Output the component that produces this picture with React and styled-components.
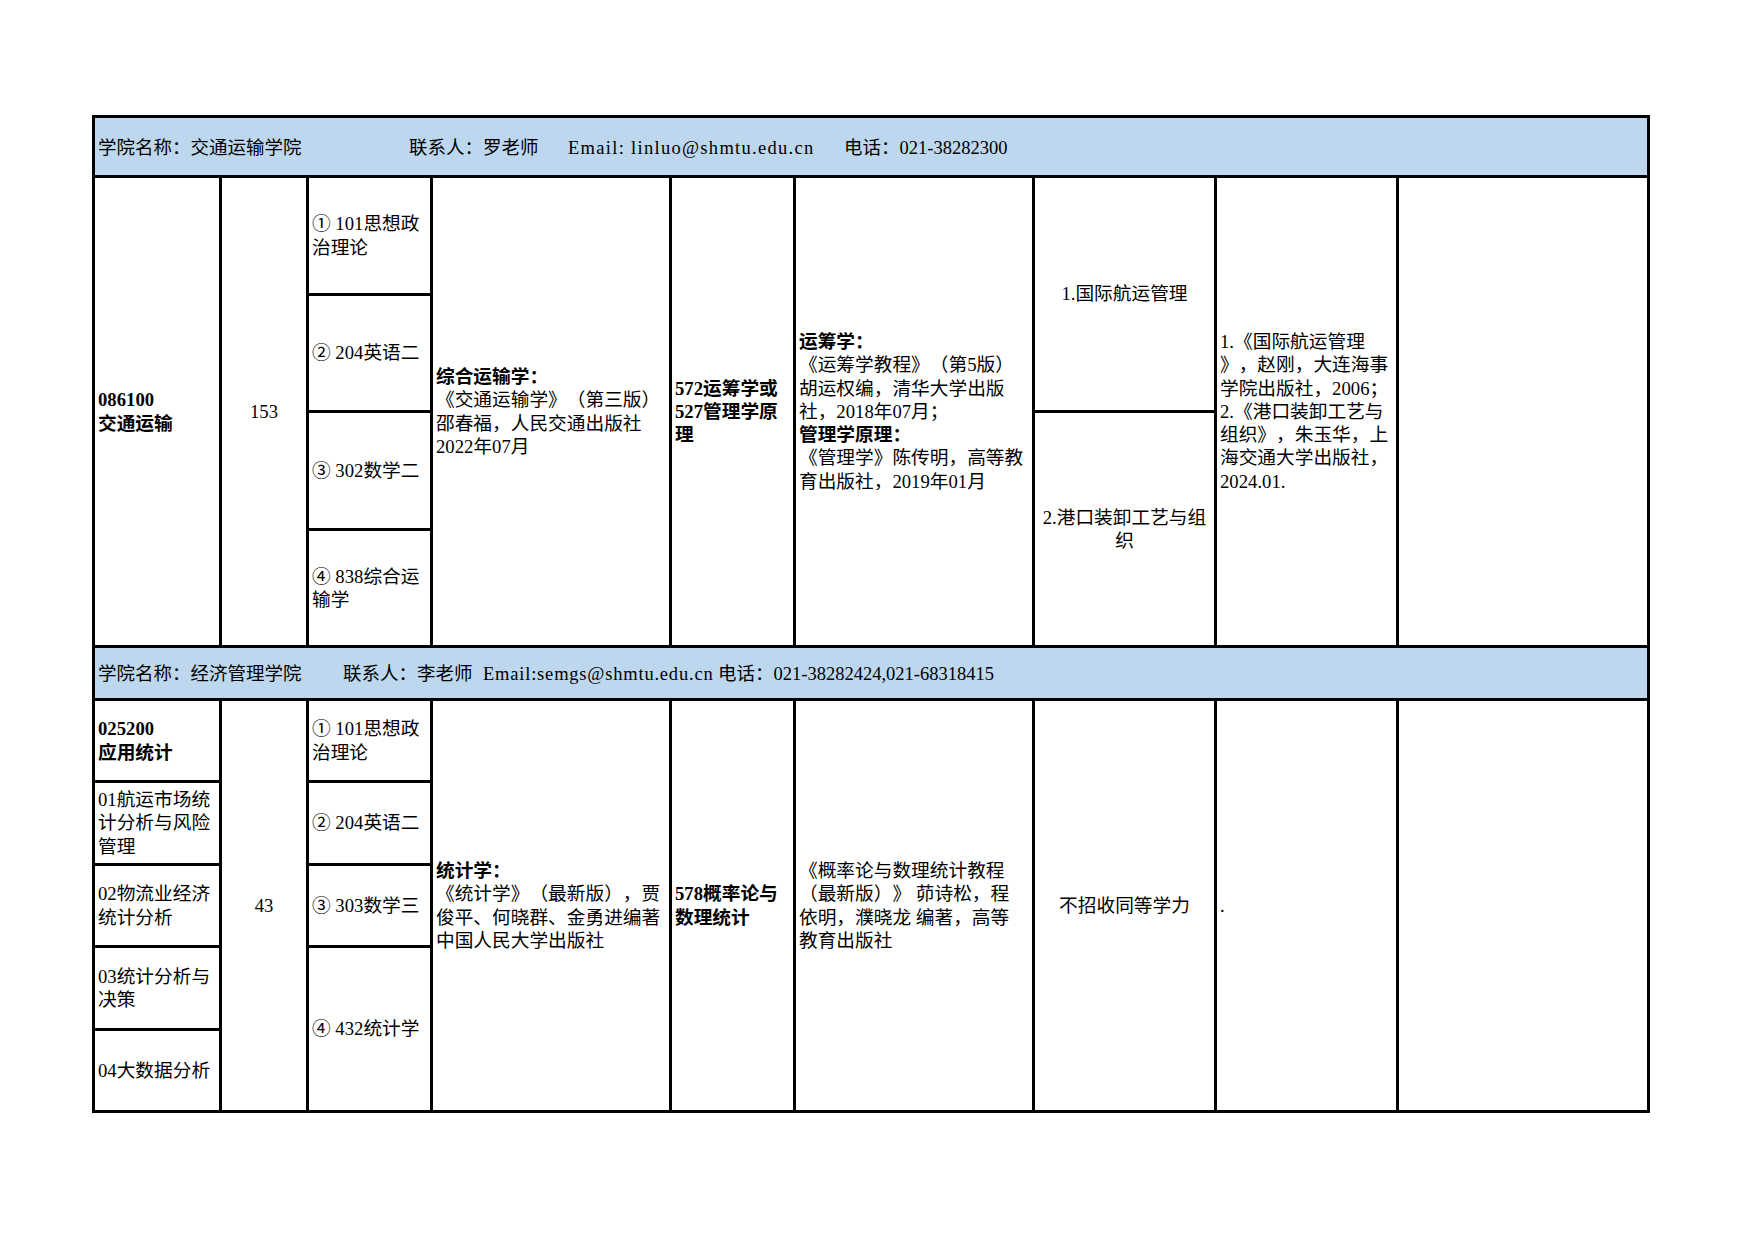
import React from "react";
import styled, { createGlobalStyle } from "styled-components";

const GlobalStyle = createGlobalStyle`
  html, body { margin: 0; padding: 0; background: #ffffff; }
  body {
    font-family: "Liberation Serif", "Noto Sans CJK SC", serif;
    color: #000;
    text-spacing-trim: space-all;
  }
`;

const Page = styled.div`
  width: 1754px;
  min-height: 1240px;
  box-sizing: border-box;
  padding: 115px 0 0 92px;
`;

const Table = styled.div`
  display: grid;
  width: max-content;
  grid-template-columns: 124px 84px 121px 236px 121px 236px 179px 179px 248px;
  grid-template-rows: 57px 115px 114px 115px 114px 50px 79px 80px 79px 80px 79px;
  gap: 3px;
  background: #000;
  border: 3px solid #000;
`;

const HeaderBand = styled.div`
  grid-column: 1 / -1;
  grid-row: ${(p) => p.$row};
  background: #bdd7ee;
  display: flex;
  align-items: center;
  padding: 2px 0 0 3px;
  font-size: 18.5px;
  line-height: 22px;
  white-space: pre;
  text-spacing-trim: space-all;
`;

const HeaderSeg = styled.span`
  flex: 0 0 ${(p) => (p.$w ? `${p.$w}px` : "auto")};
  letter-spacing: ${(p) => (p.$track ? `${p.$track}px` : "normal")};
`;

const Cell = styled.div`
  grid-column: ${(p) => p.$col};
  grid-row: ${(p) => p.$row};
  background: #fff;
  display: flex;
  flex-direction: column;
  justify-content: center;
  align-items: ${(p) => (p.$center ? "center" : "flex-start")};
  text-align: ${(p) => (p.$center ? "center" : "left")};
  padding: 0 3px;
  font-size: 18.7px;
  line-height: 23.3px;
  white-space: nowrap;
  font-weight: ${(p) => (p.$bold ? 700 : 400)};
  text-spacing-trim: space-all;
`;

const Line = styled.div`
  font-weight: ${(p) => (p.$bold ? 700 : "inherit")};
`;

const headers = [
  {
    row: 1,
    segs: [
      { t: "学院名称：交通运输学院", w: 311 },
      { t: "联系人：罗老师", w: 159 },
      { t: "Email: linluo@shmtu.edu.cn", w: 276, track: 1.3 },
      { t: "电话：021-38282300" },
    ],
  },
  {
    row: 6,
    segs: [
      { t: "学院名称：经济管理学院", w: 245 },
      { t: "联系人：李老师", w: 140 },
      { t: "Email:semgs@shmtu.edu.cn", w: 235, track: 0.8 },
      { t: "电话：021-38282424,021-68318415" },
    ],
  },
];

// "*" prefix marks a bold line
const cells = [
  // Section 1
  { col: 1, row: "2 / 6", bold: true, lines: ["086100", "交通运输"] },
  { col: 2, row: "2 / 6", center: true, lines: ["153"] },
  { col: 3, row: "2", lines: ["① 101思想政", "治理论"] },
  { col: 3, row: "3", lines: ["② 204英语二"] },
  { col: 3, row: "4", lines: ["③ 302数学二"] },
  { col: 3, row: "5", lines: ["④ 838综合运", "输学"] },
  {
    col: 4,
    row: "2 / 6",
    lines: ["*综合运输学：", "《交通运输学》（第三版）", "邵春福，人民交通出版社", "2022年07月"],
  },
  { col: 5, row: "2 / 6", bold: true, lines: ["572运筹学或", "527管理学原", "理"] },
  {
    col: 6,
    row: "2 / 6",
    lines: [
      "*运筹学：",
      "《运筹学教程》（第5版）",
      "胡运权编，清华大学出版",
      "社，2018年07月；",
      "*管理学原理：",
      "《管理学》陈传明，高等教",
      "育出版社，2019年01月",
    ],
  },
  { col: 7, row: "2 / 4", center: true, lines: ["1.国际航运管理"] },
  { col: 7, row: "4 / 6", center: true, lines: ["2.港口装卸工艺与组", "织"] },
  {
    col: 8,
    row: "2 / 6",
    lines: [
      "1.《国际航运管理",
      "》，赵刚，大连海事",
      "学院出版社，2006；",
      "2.《港口装卸工艺与",
      "组织》，朱玉华，上",
      "海交通大学出版社，",
      "2024.01.",
    ],
  },
  { col: 9, row: "2 / 6", lines: [] },
  // Section 2
  { col: 1, row: "7", bold: true, lines: ["025200", "应用统计"] },
  { col: 1, row: "8", lines: ["01航运市场统", "计分析与风险", "管理"] },
  { col: 1, row: "9", lines: ["02物流业经济", "统计分析"] },
  { col: 1, row: "10", lines: ["03统计分析与", "决策"] },
  { col: 1, row: "11", lines: ["04大数据分析"] },
  { col: 2, row: "7 / 12", center: true, lines: ["43"] },
  { col: 3, row: "7", lines: ["① 101思想政", "治理论"] },
  { col: 3, row: "8", lines: ["② 204英语二"] },
  { col: 3, row: "9", lines: ["③ 303数学三"] },
  { col: 3, row: "10 / 12", lines: ["④ 432统计学"] },
  {
    col: 4,
    row: "7 / 12",
    lines: ["*统计学：", "《统计学》（最新版），贾", "俊平、何晓群、金勇进编著", "中国人民大学出版社"],
  },
  { col: 5, row: "7 / 12", bold: true, lines: ["578概率论与", "数理统计"] },
  {
    col: 6,
    row: "7 / 12",
    lines: ["《概率论与数理统计教程", "（最新版）》 茆诗松，程", "依明，濮晓龙 编著，高等", "教育出版社"],
  },
  { col: 7, row: "7 / 12", center: true, lines: ["不招收同等学力"] },
  { col: 8, row: "7 / 12", lines: ["."] },
  { col: 9, row: "7 / 12", lines: [] },
];

export default function App() {
  return (
    <>
      <GlobalStyle />
      <Page>
        <Table>
          {headers.map((h) => (
            <HeaderBand key={h.row} $row={h.row}>
              {h.segs.map((s, i) => (
                <HeaderSeg key={i} $w={s.w} $track={s.track}>
                  {s.t}
                </HeaderSeg>
              ))}
            </HeaderBand>
          ))}
          {cells.map((c, i) => (
            <Cell key={i} $col={c.col} $row={c.row} $center={c.center} $bold={c.bold}>
              {c.lines.map((l, j) =>
                l.startsWith("*") ? (
                  <Line key={j} $bold>
                    {l.slice(1)}
                  </Line>
                ) : (
                  <Line key={j}>{l}</Line>
                )
              )}
            </Cell>
          ))}
        </Table>
      </Page>
    </>
  );
}
